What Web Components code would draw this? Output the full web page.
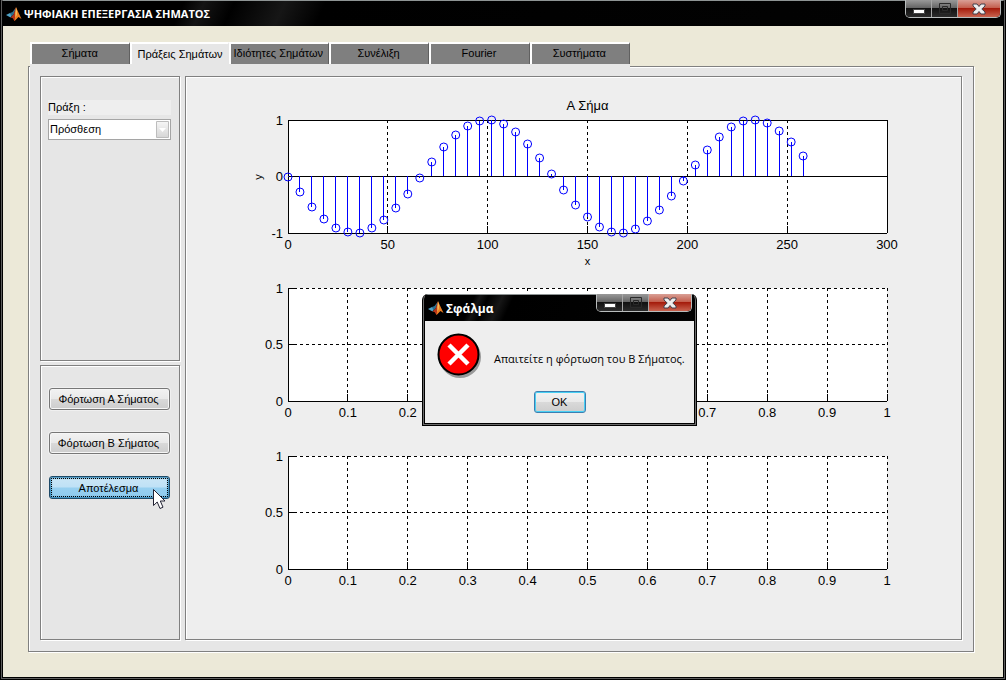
<!DOCTYPE html>
<html lang="el">
<head>
<meta charset="utf-8">
<title>ΨΗΦΙΑΚΗ ΕΠΕΞΕΡΓΑΣΙΑ ΣΗΜΑΤΟΣ</title>
<style>
  html, body { margin: 0; background: #000; }
  body { font: 11px/14px "Liberation Sans", Arial, sans-serif; color: #000; }
</style>
</head>
<body>
<signal-app></signal-app>

<template id="t-logo">
  <style>
    :host { display: block; width: 16px; height: 16px; flex: none; }
    svg { display: block; width: 16px; height: 16px; }
  </style>
  <svg viewBox="0 0 16 16" aria-hidden="true">
    <path d="M0 9 4 7 6.500 8.500 4.500 11.500Z" fill="#4fa3c7"/>
    <path d="M4 7 6.500 6 10 1.500 8 8 5.500 10.500Z" fill="#2b6f8e"/>
    <path d="M10 1 7.500 8.500 4.500 11.500 6.500 12 8.500 15 11 12Z" fill="#b5341a"/>
    <path d="M10 1 11.500 4.500 15.500 13 12.500 11 8.500 15 9.500 8Z" fill="#ee7f22"/>
    <path d="M10 1.500 10.800 5 10.600 9 9.600 11.500 9.400 7Z" fill="#fbd36a"/>
  </svg>
</template>

<template id="t-controls">
  <style>
    :host { display: block; flex: none; margin-right: 2px; }
    div { display: flex; height: 17px; border: 1px solid #b9bdbd; border-top: 0; border-radius: 0 0 5px 5px; overflow: hidden; }
    button { margin: 0; padding: 0; border: 0; width: 25px; display: grid; place-items: center;
      background: linear-gradient(#999 0, #666 45%, #111 50%, #2c2c2c 100%); }
    button + button { border-left: 1px solid #a5a5a5; width: 26px; }
    button.close { width: 43px; background: linear-gradient(#d9a096 0, #c4604f 45%, #a51c0c 50%, #c96450 100%); }
    svg { display: block; }
  </style>
  <div>
    <button aria-label="Ελαχιστοποίηση"><svg width="12" height="13"><path d="M.5 7.500H11.500V11.500H.5Z" fill="#fff" stroke="#444"/></svg></button>
    <button aria-label="Μεγιστοποίηση" disabled><svg width="12" height="11"><path d="M.5 .5H11.500V10.500H.5ZM3.500 3.500H8.500V7.500H3.500Z" fill="none" stroke="#2a2a2a"/></svg></button>
    <button class="close" aria-label="Κλείσιμο"><svg width="14" height="12"><path d="M1 1H5L7 3.500 9 1H13V3L9.800 6 13 9V11H9L7 8.500 5 11H1V9L4.200 6 1 3Z" fill="#eee" stroke="#45414c"/></svg></button>
  </div>
</template>

<template id="t-titlebar">
  <style>
    :host { display: flex; align-items: flex-start; justify-content: space-between; height: 26px; color: #fff;
      font: bold 11px/16px "Open Sans", sans-serif;
      background: linear-gradient(115deg, #000 0 18%, #141414 20%, #000 23%, #161616 28%, #000 32%, #030303 100%);
      box-shadow: inset 0 1px #8e9494; }
    .name { display: flex; gap: 2px; padding: 6px 0 0 3px; }
  </style>
  <div class="name"><matlab-logo></matlab-logo><span><slot></slot></span></div>
  <window-controls></window-controls>
</template>

<template id="t-panel">
  <style>
    :host { display: block; box-sizing: border-box; border: 1px solid #808080; background: #e6e6e6;
      box-shadow: inset 1px 1px #fff, 1px 1px #fff; }
  </style>
  <slot></slot>
</template>

<template id="t-tabs">
  <style>
    :host { display: block; position: relative; z-index: 1; width: 600px; max-width: 100%; }
    div { display: flex; height: 22px; padding-bottom: 4px; background: #e6e6e6; }
    button { flex: 1; margin: 0; padding: 0 2px 2px 0; min-width: 0; font: inherit; color: #000; white-space: nowrap;
      background: #7f7f7f; border: solid; border-width: 2px 1px 0 2px; border-color: #fff #606060 #fff #fff; }
    button[aria-selected="true"] { background: #e6e6e6; padding: 0; border-right-color: #e6e6e6; }
  </style>
  <div role="tablist"></div>
</template>

<template id="t-field">
  <style>
    :host { display: flex; flex-direction: column; gap: 4px; }
    label { background: #eee; height: 15px; }
    .box { display: grid; }
    select { grid-area: 1/1; appearance: none; margin: 0; width: 100%; height: 21px; padding: 0 1px 1px; border: 1px solid #a5a5a5;
      border-radius: 0; background: #fff; font: inherit; color: #000; }
    svg { grid-area: 1/1; justify-self: end; align-self: center; margin-right: 2px; pointer-events: none; }
  </style>
  <label for="choice"></label>
  <div class="box">
    <select id="choice"></select>
    <svg width="13" height="17"><defs><linearGradient id="g" x2="0" y2="1"><stop stop-color="#f6f6f6"/><stop offset="1" stop-color="#d6d6d6"/></linearGradient></defs>
      <path d="M.5 .5H12.500V16.500H.5Z" fill="url(#g)" stroke="#bdbdbd"/><path d="M3 7H10L6.500 11Z" fill="#fff"/></svg>
  </div>
</template>

<template id="t-button">
  <style>
    :host { display: block; position: relative; }
    button { display: block; width: 100%; height: 22px; margin: 0; padding: 0 2px 0 0; font: inherit; color: #000; white-space: nowrap;
      border: 1px solid #777; border-radius: 3px; box-shadow: inset 0 0 0 1px #f6f6f6, 0 0 0 1px #f0f0f0;
      background: linear-gradient(#f2f2f2 0, #e9e9e9 50%, #d9d9d9 52%, #cdcdcd 100%); }
    :host([kind="active"]) button { height: 23px; border-color: #1f4a68; outline: 1px dotted #000; outline-offset: -3px;
      background: linear-gradient(#cbe6f6 0, #bfe1f6 48%, #97d0f0 52%, #8fcbee 100%); box-shadow: inset 0 0 2px 1px #2f85b5; }
    :host([kind="default"]) button { padding: 0 0 1px; border-color: #3c7fb1; box-shadow: inset 0 0 0 1px #48d0f4; }
    ::slotted(svg) { position: absolute; left: 104px; top: 13px; }
  </style>
  <button><slot></slot></button>
  <slot name="pointer"></slot>
</template>

<template id="t-chart">
  <style>
    :host { display: block; }
    svg { display: block; width: 100%; height: 113px; overflow: visible; font-size: 13px; }
    .grid { stroke-dasharray: 3 3; }
    .ink, .grid { stroke: #000; shape-rendering: crispEdges; }
    .stem { stroke: #00f; shape-rendering: crispEdges; }
    .dot { fill: none; stroke: #00f; }
    .mid { text-anchor: middle; }
    .end { text-anchor: end; }
    .small { font-size: 11px; }
  </style>
  <svg role="img"></svg>
</template>

<template id="t-dialog">
  <style>
    :host { display: block; box-sizing: border-box; width: 275px; padding: 0 2px 2px; background: #eee; border: 1px solid #000;
      border-top-width: 0; box-shadow: inset 0 0 0 1px #6b6b6b, inset 0 0 0 2px #000; border-radius: 6px 6px 0 0; overflow: hidden; }
    title-bar { height: 27px; font-size: 12px; line-height: 18px; }
    .message { display: flex; align-items: center; gap: 12px; padding: 12px 0 0 12px; }
    p { margin: 6px 0 0; white-space: nowrap; font-family: "Open Sans", sans-serif; }
    .actions { display: flex; justify-content: center; padding: 13px 0 10px; }
    push-button { width: 52px; }
  </style>
  <title-bar>Σφάλμα</title-bar>
  <div class="message">
    <svg width="45" height="45" viewBox="0 0 45 45" aria-hidden="true">
      <circle cx="23" cy="24" r="21" fill="#999"/>
      <circle cx="21.500" cy="21.500" r="20" fill="#f00" stroke="#000" stroke-width="2"/>
      <path d="M12 12 31 31M31 12 12 31" stroke="#fff" stroke-width="4.500"/>
    </svg>
    <p>Απαιτείτε η φόρτωση του Β Σήματος.</p>
  </div>
  <div class="actions"><push-button kind="default">OK</push-button></div>
</template>

<template id="t-app">
  <style>
    :host { display: flex; flex-direction: column; box-sizing: border-box; min-height: 100vh; position: relative; padding: 0 2px 2px;
      background: #ece9d8; border: 1px solid #000; border-top-width: 0; box-shadow: inset 0 0 0 1px #5c5c5c, inset 0 0 0 2px #000; }
    main { flex: 1; display: flex; flex-direction: column; padding: 16px 29px 25px 25px; }
    tab-strip { margin: 0 0 -2px 2px; }
    .page { flex: 1; display: grid; grid-template-columns: 140px 1fr; gap: 5px; padding: 9px 11px 11px; }
    .side { display: flex; flex-direction: column; gap: 4px; }
    .options { height: 285px; padding: 23px 8px 0 7px; }
    .commands { flex: 1; display: flex; flex-direction: column; gap: 22px; padding: 22px 9px 22px 8px; }
    .charts { background: #eee; display: flex; flex-direction: column; gap: 55px; padding: 43px 74px 60px 102px; }
    error-dialog { position: absolute; left: 421px; top: 294px; z-index: 2; }
  </style>
  <title-bar>ΨΗΦΙΑΚΗ ΕΠΕΞΕΡΓΑΣΙΑ ΣΗΜΑΤΟΣ</title-bar>
  <main>
    <tab-strip tabs="Σήματα|Πράξεις Σημάτων|Ιδιότητες Σημάτων|Συνέλιξη|Fourier|Συστήματα" selected="1"></tab-strip>
    <etched-panel class="page">
      <div class="side">
        <etched-panel class="options"><choice-field label="Πράξη :" options="Πρόσθεση"></choice-field></etched-panel>
        <etched-panel class="commands">
          <push-button>Φόρτωση Α Σήματος</push-button>
          <push-button>Φόρτωση Β Σήματος</push-button>
          <push-button kind="active">Αποτέλεσμα
            <svg slot="pointer" width="14" height="21" aria-hidden="true"><path d="M.5 .5V16.500L4.200 13 7 19.500 10 18.200 7.300 12H12Z" fill="#fff" stroke="#223"/></svg>
          </push-button>
        </etched-panel>
      </div>
      <etched-panel class="charts">
        <axes-chart name="Α Σήμα" xname="x" yname="y" xmax="300" xstep="50" ticks="1|0|-1" signal></axes-chart>
        <axes-chart xmax="1" xstep="0.1" ticks="1|0.5|0"></axes-chart>
        <axes-chart xmax="1" xstep="0.1" ticks="1|0.5|0"></axes-chart>
      </etched-panel>
    </etched-panel>
  </main>
  <error-dialog role="dialog" aria-label="Σφάλμα"></error-dialog>
</template>

<script>
  class Base extends HTMLElement {
    constructor() {
      super();
      this.attachShadow({ mode: 'open' })
        .append(document.getElementById(this.constructor.template).content.cloneNode(true));
    }
    $(selector) { return this.shadowRoot.querySelector(selector); }
  }

  class MatlabLogo extends Base { static template = 't-logo'; }
  class WindowControls extends Base { static template = 't-controls'; }
  class TitleBar extends Base { static template = 't-titlebar'; }
  class EtchedPanel extends Base { static template = 't-panel'; }
  class PushButton extends Base { static template = 't-button'; }
  class ErrorDialog extends Base { static template = 't-dialog'; }
  class SignalApp extends Base { static template = 't-app'; }

  class TabStrip extends Base {
    static template = 't-tabs';
    connectedCallback() {
      const selected = Number(this.getAttribute('selected'));
      this.$('div').replaceChildren(...this.getAttribute('tabs').split('|').map((text, i) => {
        const tab = document.createElement('button');
        tab.setAttribute('role', 'tab');
        tab.setAttribute('aria-selected', i === selected);
        tab.textContent = text;
        return tab;
      }));
    }
  }

  class ChoiceField extends Base {
    static template = 't-field';
    connectedCallback() {
      this.$('label').textContent = this.getAttribute('label');
      this.$('select').replaceChildren(...this.getAttribute('options').split('|').map(o => new Option(o)));
    }
  }

  // Axes whose horizontal positions are percentages, so they follow the panel's width.
  class AxesChart extends Base {
    static template = 't-chart';
    connectedCallback() {
      const H = 113, xmax = Number(this.getAttribute('xmax')), xstep = Number(this.getAttribute('xstep'));
      const signal = this.hasAttribute('signal');
      const count = Math.round(xmax / xstep);
      const line = (cls, x1, y1, x2, y2) => `<line class="${cls}" x1="${x1}" y1="${y1}" x2="${x2}" y2="${y2}"/>`;
      let out = `<rect width="100%" height="${H}" fill="#fff"/>`;
      for (let i = 0; i <= count; i++) {
        const x = `${i / count * 100}%`;
        if (i > 0) out += line('grid', x, 0, x, H) + line('ink', x, H - 7, x, H);
        out += `<text class="mid" x="${x}" y="${H + 16}">${Number((i * xstep).toFixed(1))}</text>`;
      }
      this.getAttribute('ticks').split('|').forEach((t, i) => {
        const y = Math.floor(i * H / 2);
        if (i < 2) out += line(signal ? 'ink' : 'grid', 0, y, '100%', y) + line('ink', 0, y, 7, y);
        out += `<text class="end" x="-5" y="${y + 5}">${t}</text>`;
      });
      out += line('ink', 0, 0, 0, H) + line('ink', 0, H, '100%', H);
      if (signal) {
        out += line('ink', '100%', 0, '100%', H);
        for (let n = 0; n <= 258; n += 6) {
          const x = `${n / xmax * 100}%`, y = Math.round(H / 2 * (1 + Math.sin(2 * Math.PI * n / 133)));
          out += line('stem', x, 56, x, y) + `<circle class="dot" cx="${x}" cy="${y}" r="4"/>`;
        }
        out += `<text class="mid" x="50%" y="-10">${this.getAttribute('name')}</text>
          <text class="mid small" x="50%" y="145">${this.getAttribute('xname')}</text>
          <text class="mid small" transform="translate(-26 57) rotate(-90)">${this.getAttribute('yname')}</text>`;
      }
      this.$('svg').innerHTML = out;
    }
  }

  customElements.define('matlab-logo', MatlabLogo);
  customElements.define('window-controls', WindowControls);
  customElements.define('title-bar', TitleBar);
  customElements.define('etched-panel', EtchedPanel);
  customElements.define('tab-strip', TabStrip);
  customElements.define('choice-field', ChoiceField);
  customElements.define('push-button', PushButton);
  customElements.define('axes-chart', AxesChart);
  customElements.define('error-dialog', ErrorDialog);
  customElements.define('signal-app', SignalApp);
</script>
</body>
</html>
